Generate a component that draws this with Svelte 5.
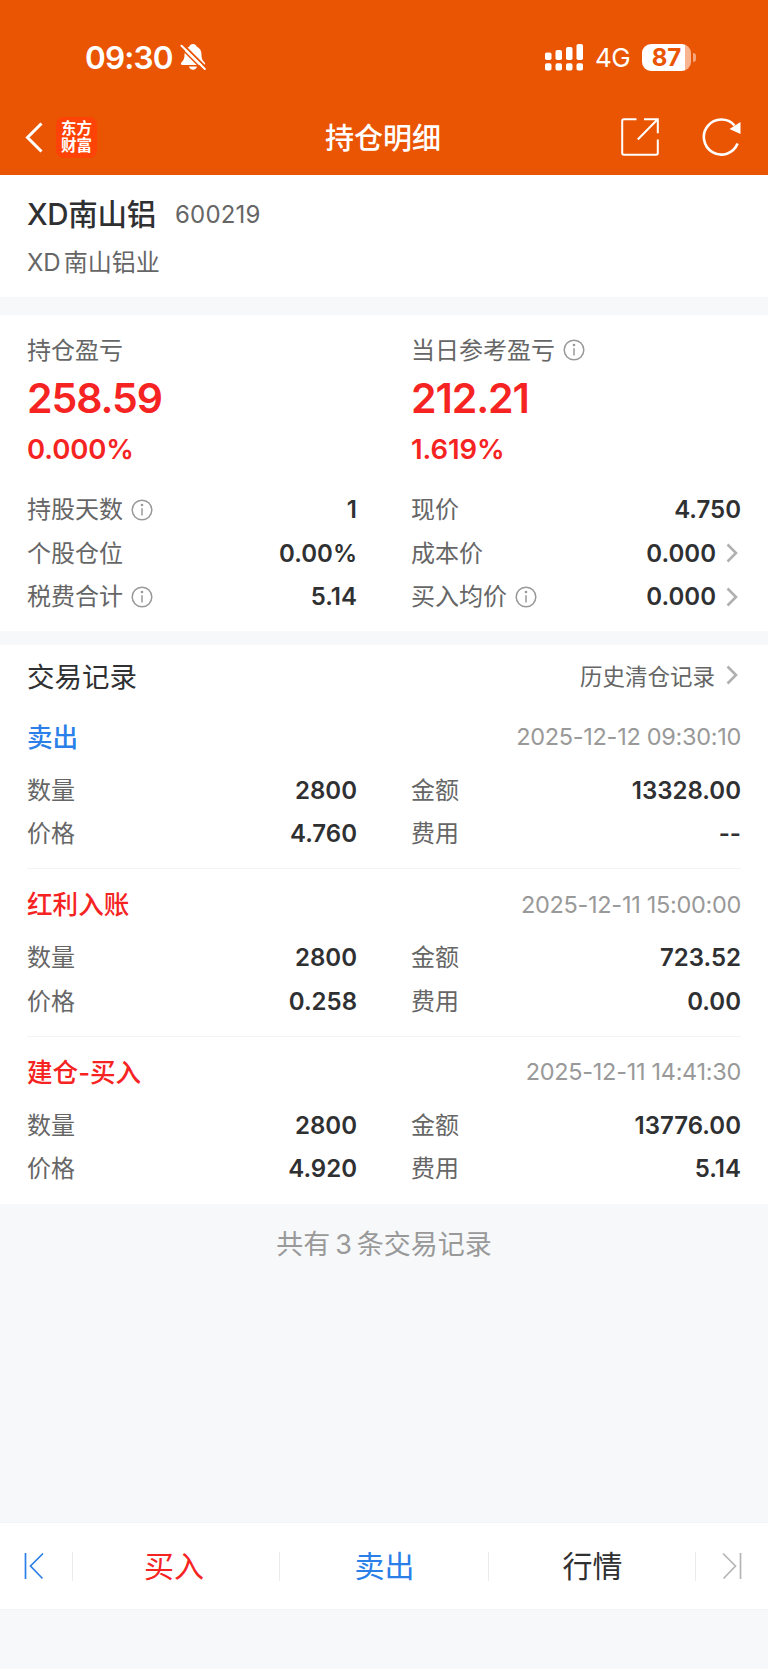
<script lang="ts">
  type Cell = { label: string; value: string; info?: boolean; link?: boolean };

  const stats: Cell[] = [
    { label: "持股天数", value: "1", info: true },
    { label: "现价", value: "4.750" },
    { label: "个股仓位", value: "0.00%" },
    { label: "成本价", value: "0.000", link: true },
    { label: "税费合计", value: "5.14", info: true },
    { label: "买入均价", value: "0.000", info: true, link: true },
  ];

  const records = [
    { type: "卖出", sell: true, time: "2025-12-12 09:30:10", count: "2800", amount: "13328.00", price: "4.760", fee: "--" },
    { type: "红利入账", sell: false, time: "2025-12-11 15:00:00", count: "2800", amount: "723.52", price: "0.258", fee: "0.00" },
    { type: "建仓-买入", sell: false, time: "2025-12-11 14:41:30", count: "2800", amount: "13776.00", price: "4.920", fee: "5.14" },
  ];

  function cells(r: (typeof records)[0]): Cell[] {
    return [
      { label: "数量", value: r.count },
      { label: "金额", value: r.amount },
      { label: "价格", value: r.price },
      { label: "费用", value: r.fee },
    ];
  }
</script>

{#snippet infoIcon()}
  <svg class="info" width="22" height="22" viewBox="0 0 22 22">
    <circle cx="11" cy="11" r="9.8" />
    <path d="M11 9.2v7.2" />
    <circle class="dot" cx="11" cy="6" r="1.3" />
  </svg>
{/snippet}

{#snippet chevron()}
  <svg class="chevron" width="12" height="20" viewBox="0 0 12 20">
    <path d="M1.5 1.5 10 10l-8.5 8.5" />
  </svg>
{/snippet}

{#snippet grid(items: Cell[])}
  <div class="grid">
    {#each items as item}
      <div class="cell">
        <span class="label">{item.label}{#if item.info}{@render infoIcon()}{/if}</span>
        <span class="value">{item.value}{#if item.link}{@render chevron()}{/if}</span>
      </div>
    {/each}
  </div>
{/snippet}

<div class="page">
  <header>
    <div class="status">
      <span class="time">09:30</span>
      <svg class="bell" width="26" height="28" viewBox="0 0 26 28">
        <path
          fill="#fff"
          d="M13 1c-1.800 0-3.200 1-3.700 2.500C6 5 4.500 8 4.500 11.500c0 4-.8 5.500-3 7.800C.4 20.500.8 22 2.300 22h21.400c1.500 0 1.900-1.500.8-2.700-2.200-2.300-3-3.800-3-7.800 0-3.500-1.500-6.500-4.800-8C16.200 2 14.800 1 13 1zM9 23.600h8c-.3 2-1.900 3.200-4 3.200s-3.700-1.200-4-3.200z"
        />
        <path d="M2.800 1.200 26 24.400" stroke="#ea5504" stroke-width="2" />
        <path d="M1.500 2.700 24.800 26" stroke="#fff" stroke-width="2" stroke-linecap="round" />
        <path d="M0 4.300 23.500 27.800" stroke="#ea5504" stroke-width="1.500" />
      </svg>
      <svg class="signal" width="38" height="27" viewBox="0 0 38 27" fill="#fff">
        <rect x="0" y="8.5" width="6.500" height="7.500" rx="1.800" />
        <rect x="10.500" y="6" width="6.500" height="10" rx="1.800" />
        <rect x="21" y="3" width="6.500" height="13" rx="1.800" />
        <rect x="31.500" y="0" width="6.500" height="16" rx="1.800" />
        <rect x="0" y="19.200" width="6.500" height="7.300" rx="1.800" />
        <rect x="10.500" y="19.200" width="6.500" height="7.300" rx="1.800" />
        <rect x="21" y="19.200" width="6.500" height="7.300" rx="1.800" />
        <rect x="31.500" y="19.200" width="6.500" height="7.300" rx="1.800" />
      </svg>
      <span class="network">4G</span>
      <div class="battery"><span>87</span></div>
      <i class="tip"></i>
    </div>
    <nav>
      <svg class="back" width="19" height="31" viewBox="0 0 19 31">
        <path d="M16.500 1.500 2.500 15.500l14 14" />
      </svg>
      <div class="logo"><span>东方</span><span>财富</span></div>
      <h1>持仓明细</h1>
      <svg class="share" width="38" height="38" viewBox="0 0 38 38">
        <path d="M15.500 1.200H3a1.800 1.800 0 0 0-1.800 1.800v32A1.800 1.800 0 0 0 3 36.800h32a1.800 1.800 0 0 0 1.800-1.800V21.500M23 1.200h13.800v14M36.200 1.800 16.800 21.500" />
      </svg>
      <svg class="reload" width="40" height="40" viewBox="0 0 40 40">
        <path d="M35.600 26.600A17.500 17.500 0 1 1 32.500 8.500" />
        <path class="head" d="M38.500 5v12L27.500 12z" />
      </svg>
    </nav>
  </header>

  <section class="stock">
    <div class="name"><strong>XD南山铝</strong><span>600219</span></div>
    <div class="full"><span>XD</span>南山铝业</div>
  </section>

  <section class="summary">
    <div class="profits">
      <div>
        <div class="label">持仓盈亏</div>
        <div class="big">258.59</div>
        <div class="rate">0.000%</div>
      </div>
      <div>
        <div class="label">当日参考盈亏{@render infoIcon()}</div>
        <div class="big">212.21</div>
        <div class="rate">1.619%</div>
      </div>
    </div>
    {@render grid(stats)}
  </section>

  <section class="trades">
    <div class="heading">
      <h2>交易记录</h2>
      <span class="history">历史清仓记录{@render chevron()}</span>
    </div>
    {#each records as record}
      <article>
        <div class="top">
          <span class="type" class:sell={record.sell}>{record.type}</span>
          <time>{record.time}</time>
        </div>
        {@render grid(cells(record))}
      </article>
    {/each}
  </section>

  <p class="total">共有<span>3</span>条交易记录</p>

  <footer>
    <button class="edge" aria-label="上一个">
      <svg width="22" height="28" viewBox="0 0 22 28"><path d="M1.500 1v26M19 1.500 6.500 14 18.500 26.500" /></svg>
    </button>
    <button class="buy">买入</button>
    <button class="sell">卖出</button>
    <button class="quote">行情</button>
    <button class="edge next" aria-label="下一个">
      <svg width="22" height="28" viewBox="0 0 22 28"><path d="M20.500 1v26M3 1.500 15.500 14 3.500 26.500" /></svg>
    </button>
  </footer>
</div>

<style>
  :global(body) {
    background: #f7f8fa;
  }

  .page {
    display: flex;
    flex-direction: column;
    width: 768px;
    height: 1669px;
    background: #f7f8fa;
    color: #2f3032;
    font-family: Inter, "Noto Sans CJK SC", sans-serif;
    overflow: hidden;
  }

  header {
    height: 175px;
    background: #ea5504;
    color: #fff;
  }

  .status {
    display: flex;
    align-items: center;
    height: 114px;
    padding-left: 85px;
    box-sizing: border-box;
  }

  .time {
    width: 88px;
    font-size: 31.5px;
    font-weight: 600;
    letter-spacing: -0.8px;
  }

  .bell {
    margin-left: 7px;
  }

  .signal {
    margin-left: 339px;
  }

  .network {
    width: 36px;
    margin-left: 12px;
    font-size: 26px;
    letter-spacing: -0.5px;
  }

  .battery {
    width: 49px;
    height: 27px;
    margin-left: 11px;
    border-radius: 9px;
    background: linear-gradient(90deg, #fff 43px, #f7b48f 43px);
    color: #ea5504;
    font-size: 24px;
    font-weight: 700;
    line-height: 27px;
    text-align: center;
  }

  .tip {
    width: 3px;
    height: 9px;
    margin-left: 2px;
    border-radius: 0 4px 4px 0;
    background: #f4a57b;
  }

  nav {
    display: flex;
    align-items: center;
    height: 46px;
    padding-left: 25px;
  }

  nav svg {
    fill: none;
    stroke: #fff;
    stroke-width: 2;
  }

  nav .back {
    stroke-width: 3;
  }

  .logo {
    display: flex;
    flex-direction: column;
    justify-content: center;
    width: 41px;
    height: 41px;
    margin-left: 12px;
    border-radius: 8px;
    background: #ff4205;
    font-size: 15.5px;
    font-weight: 700;
    line-height: 17px;
    text-align: center;
  }

  .logo span:last-child {
    padding-bottom: 1px;
  }

  h1 {
    width: 118px;
    margin: 0 0 0 228px;
    padding-bottom: 3px;
    font-size: 29px;
    font-weight: 500;
    white-space: nowrap;
  }

  .share {
    margin-left: 178px;
  }

  .reload {
    margin-left: 43px;
  }

  nav .reload {
    stroke-width: 2.6;
  }

  nav .head {
    fill: #fff;
    stroke: none;
  }

  .stock {
    height: 122px;
    padding: 20px 27px 0;
    box-sizing: border-box;
    background: #fff;
  }

  .name {
    display: flex;
    align-items: center;
    height: 38px;
  }

  .name strong {
    width: 148px;
    padding-bottom: 4px;
    font-size: 29.5px;
    font-weight: 500;
    letter-spacing: -0.3px;
  }

  .name span {
    color: #666;
    font-size: 24px;
    letter-spacing: 0.2px;
  }

  .full {
    color: #666;
    font-size: 24px;
    line-height: 59px;
  }

  .full span {
    margin-right: 3px;
  }

  .summary {
    height: 316px;
    margin-top: 18px;
    padding: 18px 27px 0;
    box-sizing: border-box;
    background: #fff;
  }

  .profits {
    display: grid;
    grid-template-columns: 384px 1fr;
    height: 155px;
  }

  .label {
    display: flex;
    align-items: center;
    padding-bottom: 4px;
    color: #666;
    font-size: 24px;
  }

  .profits .label {
    height: 30px;
    padding-bottom: 6px;
  }

  .info {
    margin-top: 4px;
    margin-left: 8px;
    fill: none;
    stroke: #999;
    stroke-width: 1.5;
  }

  .dot {
    fill: #999;
    stroke: none;
  }

  .chevron {
    margin-left: 10px;
    fill: none;
    stroke: #b0b0b0;
    stroke-width: 2.6;
  }

  .big {
    height: 59px;
    color: #f62323;
    font-size: 41px;
    font-weight: 600;
    letter-spacing: -1.1px;
    line-height: 59px;
  }

  .rate {
    height: 43px;
    color: #f62323;
    font-size: 27.5px;
    font-weight: 600;
    letter-spacing: -0.1px;
    line-height: 43px;
  }

  .grid {
    display: grid;
    grid-template-columns: 330px 330px;
    column-gap: 54px;
    grid-auto-rows: 43.6px;
  }

  .cell,
  .heading,
  .top {
    display: flex;
    align-items: center;
    justify-content: space-between;
  }

  .value {
    display: flex;
    align-items: center;
    font-size: 24px;
    font-weight: 600;
  }

  .value .chevron,
  .history .chevron {
    margin-right: 3px;
  }

  .trades {
    height: 559px;
    margin-top: 14px;
    padding: 0 27px;
    box-sizing: border-box;
    background: #fff;
  }

  .heading {
    height: 56.5px;
    padding-top: 3px;
    box-sizing: border-box;
  }

  h2 {
    margin: 0;
    font-size: 27.5px;
    font-weight: 400;
  }

  .history {
    display: flex;
    align-items: center;
    color: #666;
    font-size: 22.5px;
  }

  .history .chevron {
    margin-left: 11px;
  }

  article {
    height: 167.5px;
    border-bottom: 1px solid #f3f3f4;
    box-sizing: border-box;
  }

  article:last-child {
    border: 0;
  }

  .top {
    height: 67px;
    padding-top: 3px;
    box-sizing: border-box;
  }

  .type {
    padding-bottom: 3px;
    color: #f62323;
    font-size: 25.6px;
    font-weight: 500;
  }

  .type.sell {
    color: #2b7fe8;
  }

  time {
    color: #999;
    font-size: 23.5px;
    letter-spacing: -0.3px;
  }

  .total {
    margin: 0;
    height: 82px;
    color: #999;
    font-size: 27px;
    line-height: 82px;
    text-align: center;
  }

  .total span {
    margin: 0 5px;
  }

  footer {
    display: grid;
    grid-template-columns: 73px 207px 209px 207px 72px;
    height: 86px;
    margin-top: auto;
    margin-bottom: 60px;
    background: #fff;
    outline: 1px solid #f3f4f6;
  }

  button {
    display: flex;
    align-items: center;
    justify-content: center;
    padding: 0 0 4px;
    border: 0;
    background: linear-gradient(#ebebeb, #ebebeb) right center / 1px 29px no-repeat;
    color: #2f3032;
    font-family: inherit;
    font-size: 30px;
  }

  .edge {
    justify-content: flex-start;
    padding: 0 0 0 24px;
  }

  .edge svg {
    fill: none;
    stroke: #2b7fe8;
    stroke-width: 1.7;
  }

  .next {
    background: none;
  }

  .next svg {
    stroke: #b5b5b5;
  }

  .buy {
    padding-right: 5px;
    color: #f62323;
  }

  footer .sell {
    color: #2b7fe8;
  }
</style>
